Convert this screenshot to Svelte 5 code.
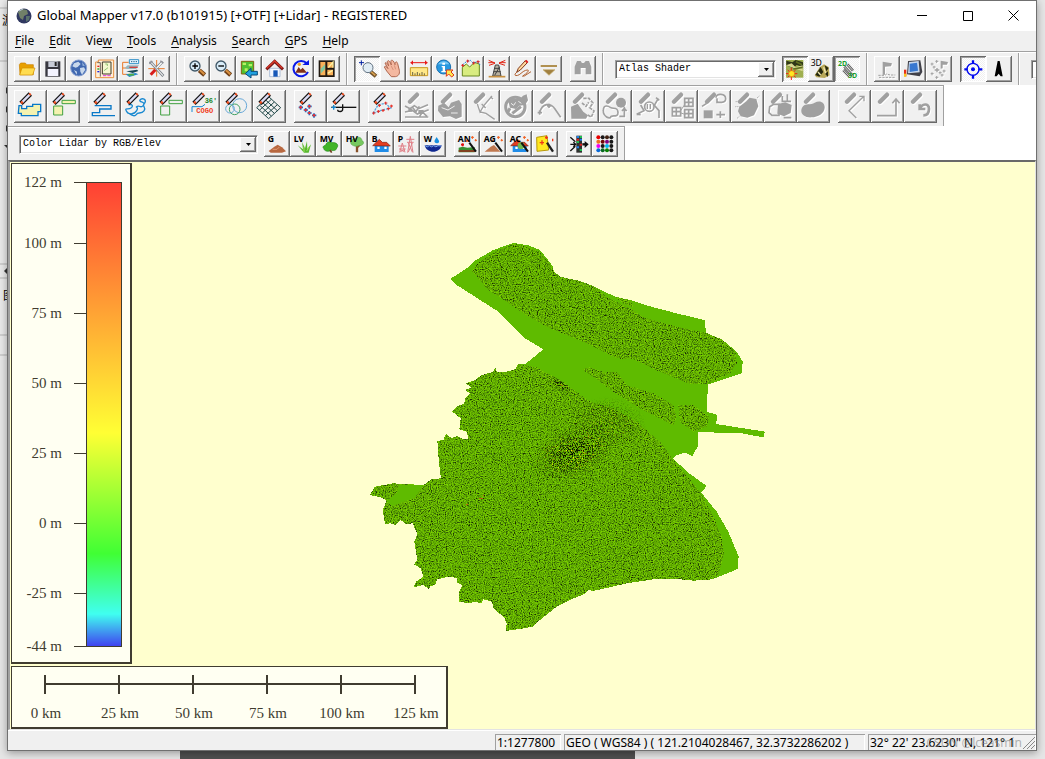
<script lang="ts">
  interface Tool {
    label: string;
    art: string;
    off?: boolean;
    pressed?: boolean;
  }

  const menus = ['File', 'Edit', 'View', 'Tools', 'Analysis', 'Search', 'GPS', 'Help'];
  const hotkeys: Record<string, number> = { View: 3 };

  // Icons are drawn on a grid of 3 units per pixel: 78 for small buttons, 99 for large ones
  const pencil =
    '<path d="M49 12 21 40" stroke="#111" stroke-width="14"/><path d="M47 14 24 37" stroke="#dcdcf4" stroke-width="7"/><path d="M50 11l-4 4M26 35l-5 5" stroke="#f05020" stroke-width="7"/>';
  const grayPencil = '<path d="M48 14 27 35" stroke="#a0a0a0" stroke-width="13" stroke-linecap="round"/>';
  const wand = '<path d="M46 35 66 62" stroke="#111" stroke-width="6"/><path d="M55 15v9M51 19h9M65 24v7M62 28h7M38 26v7M35 30h7" stroke="#f06020" stroke-width="3"/>';
  const house = '<path d="M20 42h42v21H20z" fill="#208ce8"/><path d="M14 44 34 25l9 9h13l11 11z" fill="#e43c20" stroke="#802010" stroke-width="2"/><path d="M28 47h7v7h-7zM49 47h7v7h-7z" fill="#fff"/>';
  const plus = (points: number[][], color: string) =>
    points.map(([x, y]) => `<path d="M${x - 4} ${y}h9M${x} ${y - 4}v9" stroke="${color}" stroke-width="3"/>`).join('');
  const tag = (t: string) => `<text x="11" y="33" font-family="Noto Sans, sans-serif" font-weight="700" font-size="26" fill="#000">${t}</text>`;
  const tower = (x: number, y: number, h: number) =>
    `<path d="M${x} ${y}l-8 ${h}M${x} ${y}l8 ${h}M${x - 12} ${y + 9}h24M${x - 10} ${y + 18}h20M${x - 6} ${y + 20}l12 ${h - 22}M${x + 6} ${y + 20}l-12 ${h - 22}" stroke="#e08088" stroke-width="3"/>`;
  const magnifier = (sign: string) =>
    `<path d="M46 43 62 57" stroke="#704018" stroke-width="13"/><path d="M48 43 61 55" stroke="#d89040" stroke-width="6"/><circle cx="33" cy="30" r="15" fill="#d8ecf8" stroke="#405868" stroke-width="4"/><path d="${sign}" stroke="#000" stroke-width="4"/>`;

  const fileTools: Tool[] = [
    { label: 'Open Data File', art: '<path d="M16 26l4-5h14l4 5h20v30H18z" fill="#e8a000" stroke="#c88000" stroke-width="2"/><path d="M17 57 24 36h39l-7 21z" fill="#ffdc50" stroke="#d09000" stroke-width="2"/>' },
    { label: 'Save Workspace', art: '<path d="M16 16h45v46H16z" fill="#383840"/><path d="M25 16h28v17H25z" fill="#c8ccd8"/><path d="M44 18h6v12h-6z" fill="#222"/><path d="M23 39h32v21H23z" fill="#f4f4ff"/>' },
    { label: 'Download Online Imagery', art: '<circle cx="38" cy="36" r="24" fill="#4068b0" stroke="#88a0d0" stroke-width="3"/><path d="M24 22l13-5 7 7-9 9-6 2-10-4zM42 36l12-2 4 7-10 15-5-9zM24 42l9 5-1 9z" fill="#c8d8ec"/><path d="M48 18l9 11-7 1z" fill="#90b0d8"/>' },
    { label: 'Overlay Control Center', art: '<path d="M11 18h8v-6h46v53H11z" fill="#fff0d8" stroke="#e89040" stroke-width="3"/><path d="M31 18h26v36H31z" fill="#f4f8d0" stroke="#403828" stroke-width="3"/><path d="M16 20h9v42" stroke="#222" stroke-width="2"/><path d="M16 31h6" stroke="#e02020" stroke-width="4"/><path d="M16 39h6" stroke="#20a020" stroke-width="4"/><path d="M16 47h6" stroke="#2020e0" stroke-width="4"/><path d="M40 24h6v6M36 44l12-9" stroke="#90c070" stroke-width="3"/><path d="M33 59h24" stroke="#e03ce0" stroke-width="3" stroke-dasharray="10 3"/>' },
    { label: 'Map Catalog', art: '<path d="M32 19H14v36h15M14 36h12" stroke="#e87828" stroke-width="3"/><path d="M34 11h28v12H34z" fill="#e8f8ff" stroke="#3090c8" stroke-width="3"/><path d="M39 17h19" stroke="#205888" stroke-width="3" stroke-dasharray="4 3"/><path d="M21 35l8-7h34l-9 11H26z" fill="#98b8c0"/><path d="M34 34h25" stroke="#d04040" stroke-width="4"/><path d="M25 46l32-5 4 4-17 6z" fill="#184858"/><path d="M23 55l30-4 8 4-27 8z" fill="#2888c8"/><path d="M31 56h17" stroke="#50b040" stroke-width="5"/>' },
    { label: 'Configure', art: '<path d="M38 12v50M13 38h49" stroke="#e87828" stroke-width="3"/><path d="M18 16 58 60" stroke="#707880" stroke-width="8"/><path d="M19 17 57 59" stroke="#e8e8e8" stroke-width="4"/><path d="M56 17 37 36" stroke="#788088" stroke-width="8"/><path d="M55 18 38 36" stroke="#fff" stroke-width="4"/><path d="M34 41 20 56" stroke="#d81c1c" stroke-width="9"/><path d="M16 23l9-8M49 14l9 8" stroke="#909098" stroke-width="4"/>' }
  ];

  const viewTools: Tool[] = [
    { label: 'Zoom In', art: magnifier('M25 30h17M33 22v17') },
    { label: 'Zoom Out', art: magnifier('M25 30h17') },
    { label: 'Zoom To Layer', art: '<path d="M16 16h37v38H16z" fill="#50c030" stroke="#806010" stroke-width="3"/><path d="M20 20h10v7H20zM38 24h10v7H38zM26 37h9v9h-9z" fill="#b8f060"/><path d="M64 46H45v-9L28 53l17 13v-9h19z" fill="#20a0e0" stroke="#084878" stroke-width="3"/>' },
    { label: 'Full View', art: '<path d="M23 37h31v25H23z" fill="#f4f8ff" stroke="#90a8c8" stroke-width="2"/><path d="M13 40 38 16l25 24" stroke="#781818" stroke-width="9"/><path d="M14 37 38 15l23 22" stroke="#d83828" stroke-width="4"/><path d="M34 43h13v19H34z" fill="#1858b8"/>' },
    { label: 'Restore Last View', art: '<path d="M60 48A23 23 0 1 1 57 23" stroke="#0818e8" stroke-width="6"/><path d="M43 27h20V12z" fill="#0818e8"/><path d="M22 50 32 33l6 8 6-6 13 15z" fill="#803018"/><circle cx="34" cy="25" r="5" fill="#f0a020"/>' },
    { label: 'Map Layout', art: '<path d="M14 13h48v50H14z" fill="#201810"/><path d="M19 18h15v40H19zM40 18h17v17H40zM40 41h17v17H40z" fill="#f8b058"/><path d="M20 38 33 25v14L20 53z" fill="#80c8a0"/><path d="M43 35 57 18v17M41 52l15-9" stroke="#fff0a0" stroke-width="4"/>' }
  ];

  const digitizeTools: Tool[] = [
    { label: 'Zoom Tool', pressed: true, art: '<path d="M15 20h15M22 13v15" stroke="#0020a0" stroke-width="3"/><path d="M50 47 66 61" stroke="#705028" stroke-width="12"/><path d="M51 47 64 58" stroke="#d8a050" stroke-width="5"/><circle cx="42" cy="35" r="15" fill="#e0ecf4" stroke="#607080" stroke-width="3"/>' },
    { label: 'Grab and Drag', art: '<path d="M15 21c5-4 9 5 11 9l-4-14c4-6 9 3 12 11-3-12-1-16 3-14 4 1 7 10 8 13 0-9 5-12 8-3l5 20c2 12-4 18-12 19H34L20 45l-7-12c3-6 8 2 11 5z" fill="#f4b8a0" stroke="#b06850" stroke-width="3"/><path d="M33 29l7 13M43 28l4 12" stroke="#c88068" stroke-width="2"/>' },
    { label: 'Measure', art: '<path d="M14 20h50" stroke="#e81818" stroke-width="3"/><path d="M21 13l-8 7 8 7zM57 13l8 7-8 7z" fill="#e81818"/><path d="M13 35h52v24H13z" fill="#ffe888" stroke="#c89820" stroke-width="3"/><path d="M20 58V48M27 58v-6M34 58V48M41 58v-6M48 58V48M55 58v-6" stroke="#202020" stroke-width="2"/>' },
    { label: 'Feature Info', art: '<circle cx="35" cy="33" r="21" fill="#2898e0" stroke="#1870b0" stroke-width="3"/><path d="M18 25a20 20 0 0 1 34 0z" fill="#78c8f4"/><path d="M31 20h8v6h-8zM29 30h10v15h4v4H28v-4h4V34h-3z" fill="#fff"/><path d="M43 42h20l-6 6 9 9-7 6-9-9-7 7z" fill="#ffe850" stroke="#e03818" stroke-width="3"/>' },
    { label: 'Path Profile', art: '<path d="M13 34 25 24l10 9 14-14 15 5v36H13z" fill="#d8ec80" stroke="#688820" stroke-width="3"/><path d="M13 27 25 17l12-4 9 9 13-6 7 11" stroke="#1888e0" stroke-width="3" stroke-dasharray="6 3"/>' + plus([[14, 28], [29, 15], [47, 21], [60, 17]], '#e02020') },
    { label: 'View Shed', art: '<path d="M34 27h10l7 33H26z" fill="#b8b0a0" stroke="#444" stroke-width="3"/><path d="M30 37h17M29 47h21M32 58l15-26" stroke="#404040" stroke-width="3"/><path d="M14 13l19 8M13 20h19M15 28l18-6M64 13l-19 8M65 20H46M63 28l-18-6" stroke="#e02818" stroke-width="3"/><path d="M14 62h50" stroke="#c89040" stroke-width="5"/>' },
    { label: 'Digitizer', art: '<path d="M46 14 25 37l-5 12 11-7 21-22z" fill="#ffd8a0" stroke="#803818" stroke-width="3"/><path d="M47 13l6 7" stroke="#e02020" stroke-width="6"/><path d="M21 48c-15 12 1 15 12 4s28-14 20-4-24 15-10 12l20-13" stroke="#b06030" stroke-width="3"/>' },
    { label: 'More Tools', art: '<path d="M14 27h49v6H14z" fill="#b09050"/><path d="M21 41h36L39 58z" fill="#a08040" stroke="#c8b070" stroke-width="2"/>' }
  ];

  const find: Tool = { label: 'Find', off: true, art: '<path d="M14 55V32l7-17h11l4 6h6l5-6h10l7 17v23H47V36H32v19z" fill="#a0a0a0"/>' };

  const shaderTools: Tool[] = [
    { label: 'Hill Shading', pressed: true, art: '<path d="M12 12h52v53H12z" fill="#a0b050"/><path d="M13 14l18 5 10-7 22 7v14l-19-6-11 10-20-9z" fill="#303818"/><path d="M12 28 29 22l12 12 21-6v18z" fill="#d8d890"/><path d="M42 17l18 9M34 39l28-5" stroke="#607020" stroke-width="5"/><path d="M28 35v37M12 53h34M17 42l24 22M41 42 17 64" stroke="#f02010" stroke-width="3"/><circle cx="29" cy="53" r="9" fill="#ffe820" stroke="#e87010" stroke-width="2"/>' },
    { label: '3D View', art: '<path d="M20 58 35 34l13-9 14 8 3 25-15 8-25-2z" fill="#b8a858"/><path d="M22 57 38 33l8 15-12 14zM50 28l12 8-7 10zM51 53l9-7v17z" fill="#252810"/><path d="M30 48l8 9M47 34l6 18" stroke="#f0e8b0" stroke-width="4"/><text x="8" y="31" font-family="Noto Sans, sans-serif" font-size="26" fill="#000">3D</text>' },
    { label: 'Link 2D and 3D', pressed: true, art: '<path d="M31 32l25 27M28 42l18 19M40 25l17 19" stroke="#606060" stroke-width="8"/><path d="M31 32l25 27M28 42l18 19M40 25l17 19" stroke="#d8d8d8" stroke-width="3"/><text x="12" y="31" font-family="Noto Sans, sans-serif" font-weight="700" font-size="21" fill="#18a030">2D</text><text x="42" y="66" font-family="Noto Sans, sans-serif" font-weight="700" font-size="21" fill="#18a030">3D</text>' }
  ];

  const gpsTools: Tool[] = [
    { label: 'Mark Waypoint', off: true, art: '<path d="M26 57V17l28 5-3 9-18 1v24" fill="#a0a0a0"/><path d="M13 58h20l5-4 10 3h16M15 64h47" stroke="#a0a0a0" stroke-width="3" stroke-dasharray="7 3"/>' },
    { label: 'GPS Tracking', art: '<path d="M24 15l37-2 6 35-8 13-38-6z" fill="#404048"/><path d="M27 18l29-3 3 34-35 3z" fill="#c8d8ec"/><path d="M29 23l22-3 3 24-25 4z" fill="#3878d0"/><path d="M12 41h7v20h-7z" fill="#e83018"/><path d="M12 53h7v9h-7z" fill="#f8c820"/>' },
    { label: 'GPS Vector', off: true, art: plus([[18, 24], [32, 16], [18, 53], [32, 64], [48, 57], [54, 45], [24, 33], [42, 50]], '#a0a0a0') + '<path d="M33 36v13M26 42h14" stroke="#a0a0a0" stroke-width="4"/><path d="M44 38V14l22 4-3 8H50v11" fill="#a0a0a0"/>' }
  ];

  const centerTools: Tool[] = [
    { label: 'Keep Vehicle Centered', pressed: true, art: '<circle cx="39" cy="40" r="18" stroke="#0008f0" stroke-width="4"/><circle cx="39" cy="40" r="6" fill="#0008f0"/><path d="M39 13v11M39 56v12M13 40h10M55 40h12" stroke="#0008f0" stroke-width="7"/>' },
    { label: 'North Arrow', art: '<path d="M35 15h6l9 46h-6l-6-8-6 8h-6z" fill="#000"/>' }
  ];

  const rects = (fill: string) =>
    `<path d="M20 48h27v27H20zM45 31h40v10H45z" fill="${fill}" stroke="#40a040" stroke-width="3"/>`;

  const areaTools: Tool[] = [
    { label: 'Create Area', art: '<path d="M15 47h8v9h15v-7h18v-6h24v22h-8v12H22v-7h-9z" fill="#f4f2b0" stroke="#0878c8" stroke-width="4"/>' + pencil },
    { label: 'Create Rectangle Area', art: rects('#f4f2b0') + pencil }
  ];

  const lineTools: Tool[] = [
    { label: 'Create Line', art: '<path d="M20 47h49v10H35v11H13v9h68" stroke="#0878c8" stroke-width="4"/>' + pencil },
    { label: 'Create Freehand Line', art: '<path d="M22 45c10-4 17 2 8 9s-20-3-14 9 23 12 31-1-7-9 2-13 9 8 18-3-15-9-10-16 17-3 16 5-10 6-4 15-1 19-14 19-6 10-18 8-12-10-19-8" stroke="#1888d0" stroke-width="4"/>' + pencil },
    { label: 'Create Rectangle Line', art: rects('none') + pencil },
    { label: 'Create Line by COGO', art: '<path d="M15 66V50h30l9-7" stroke="#1888d0" stroke-width="3"/><text x="53" y="38" font-family="Liberation Mono, monospace" font-weight="700" font-size="21" fill="#108020">36\'</text><text x="28" y="70" font-family="Liberation Mono, monospace" font-weight="700" font-size="21" fill="#f03818">COGO</text>' + pencil },
    { label: 'Create Range Rings', art: '<g stroke-width="3"><circle cx="59" cy="47" r="21" stroke="#68a8d8"/><circle cx="44" cy="58" r="16" stroke="#40a060"/><circle cx="30" cy="56" r="13" stroke="#68a8d8"/></g>' + pencil },
    { label: 'Create Grid', art: '<path d="M11 53 47 86 83 53 47 20zM19 45l36 33M28 37l36 33M37 29l36 33M19 61l36-33M28 69l36-33M37 77l36-33" stroke="#204848" stroke-width="3"/>' + pencil }
  ];

  const pointTools: Tool[] = [
    { label: 'Create Point', art: [[20, 52], [35, 60], [46, 49], [46, 69], [60, 76]].map(([x, y]) => `<path d="M${x - 6} ${y}h13M${x} ${y - 6}v13" stroke="#1870c8" stroke-width="5"/><circle cx="${x}" cy="${y}" r="4" fill="#e83030"/>`).join('') + pencil },
    { label: 'Create Spot', art: '<path d="M13 52h75" stroke="#111" stroke-width="4"/><path d="M14 52h13M20 45v14" stroke="#1888d0" stroke-width="4"/><path d="M47 43v15c0 9-15 8-15 1" stroke="#111" stroke-width="4"/>' + pencil }
  ];

  const g = (d: string) => grayPencil + `<path d="${d}" stroke="#a0a0a0" stroke-width="5"/>`;
  const gf = (d: string, holes = '') => grayPencil + `<path d="${d}" fill="#a0a0a0"/><path d="${holes}" stroke="#eee" stroke-width="3"/>`;

  const editTools: Tool[] = [
    { label: 'Edit Vertices', art: '<path d="M16 69 47 59 68 54 52 40 30 45z" stroke="#58a8e0" stroke-width="4" stroke-dasharray="7 3"/>' + plus([[17, 69], [31, 64], [45, 61], [61, 56], [70, 48], [53, 39], [34, 46]], '#e82820') + pencil },
    { label: 'Edit Features', off: true, art: g('M12 48l15 8 13-9 13 9 28-12M12 66l22-5 15 11 34-13M12 81h70M33 50l12 15 10-16M56 79l8-13 14 13') + '<path d="M22 56h12v9H22zM52 60h16v12H52z" fill="#a0a0a0"/>' },
    { label: 'Combine Areas', off: true, art: gf('M13 47l18-8 13 13 7-14 24-8 8 12v38l-17 7-18-8-21 2-15-19z', 'M23 53l19 7 20-12M51 69h20') },
    { label: 'Split Line', off: true, art: g('M31 42l8 24 12-20 24-28M40 66l17 4 26 18M44 42l12 12M70 20l8 7').replace('stroke-width="5"', 'stroke-width="4"') },
    { label: 'Rotate Features', off: true, art: '<circle cx="46" cy="51" r="29" stroke="#a0a0a0" stroke-width="9"/><path d="M25 34l12-9 23 2 9-10 11-4 4 18-9 14-17 2-10 10-18-4z" fill="#a0a0a0"/><path d="M37 70l26-20M30 55l-8 14" stroke="#a0a0a0" stroke-width="9"/><path d="M33 40l8 6 6-9M55 34l9 6" stroke="#eee" stroke-width="3"/>' },
    { label: 'Insert Vertex', off: true, art: g('M20 68C28 36 54 39 66 57l17 25M14 68h13M20 61v13M42 48h13M48 41v13') },
    { label: 'Move Features', off: true, art: gf('M15 50l20-9 17 24 14 11-6 10H16z') + '<path d="M52 25h17l12 14-10 14 13 10-8 18-13-7M48 39l12 10 8-12" stroke="#a0a0a0" stroke-width="5" stroke-dasharray="10 3"/>' },
    { label: 'Shift Features', off: true, art: g('M13 62c0-20 15-14 22-9s21-4 22 14-20 6-22 14-23-2-22-19M61 79h15V50M69 63l7-8 7 8') + '<circle cx="66" cy="38" r="15" fill="#a0a0a0"/>' },
    { label: 'Scale Features', off: true, art: g('M14 73l22-11-10-17M81 84V62L67 46l12-21M14 73l12 1M72 23l10 8') + '<circle cx="52" cy="50" r="14" stroke="#a0a0a0" stroke-width="5"/><path d="M46 42v15M55 42v15" stroke="#a0a0a0" stroke-width="4"/>' },
    { label: 'Snap Features', off: true, art: grayPencil + '<path d="M22 53h25v25H22zM22 65h25M34 53v25M59 25h25v24H59zM59 37h25M71 25v24M59 59h25v24H59zM59 71h25M71 59v24" stroke="#a0a0a0" stroke-width="5"/><path d="M44 66l17-25M46 68l15 6" stroke="#a0a0a0" stroke-width="3"/>' },
    { label: 'Convert Features', off: true, art: g('M12 49l14-9M54 23c0-15 29-12 29 3S59 38 57 34M57 25v12h11M55 74h26M67 64v20') + '<path d="M17 61h27v24H17z" fill="#a0a0a0"/>' },
    { label: 'Resize Area', off: true, art: gf('M25 50l21-16 10-11 20 4 6 22-13 27-20 7-20-4-8-15z') + '<path d="M13 50h13M14 35h7M78 24l7-6M25 79l-8 7" stroke="#a0a0a0" stroke-width="3" stroke-dasharray="3 3"/>' },
    { label: 'Duplicate Area', off: true, art: gf('M42 42l22-5 19 8-3 24-20 10-20-8z') + '<path d="M17 50l12-7h16v33H24l-9-8zM55 18v16h26M70 13v20M59 83h23" stroke="#a0a0a0" stroke-width="5"/>' },
    { label: 'Buffer Area', off: true, art: gf('M15 53c9-17 27-6 38-15 16-9 31-1 30 15-1 18-20 28-39 29-22 2-37-12-29-29z') }
  ];

  const undoTools: Tool[] = [
    { label: 'Crop to Line', off: true, art: g('M55 84 33 62l23-22 20-20M64 19h14v15').replace('stroke-width="5"', 'stroke-width="4"') },
    { label: 'Extend Line', off: true, art: g('M18 77h57V29M64 40l11-13 11 13') },
    { label: 'Undo', off: true, art: g('M47 43v14h17M48 56c5-15 27-18 27 0 0 13-7 20-17 20').replace('stroke-width="5"', 'stroke-width="8"') }
  ];

  const lidarTools: Tool[] = [
    { label: 'Ground', art: tag('G') + '<path d="M14 60 31 47l10-6 13 8 12 12-12 4H20z" fill="#b86840"/><path d="M26 55h13l7-7" stroke="#e09870" stroke-width="3"/>' },
    { label: 'Low Vegetation', art: '<path d="M42 65 23 43l16 12-3-22 9 19 6-22 1 24 11-14-7 25z" fill="#58b830"/><path d="M42 63V47M50 60l7-12" stroke="#a0e060" stroke-width="3"/>' + tag('LV') },
    { label: 'Medium Vegetation', art: '<path d="M29 43c1-10 13-13 19-8 14-2 22 8 14 16-1 9-12 8-16 7-12 7-23 0-23-6-5-5 1-8 6-9z" fill="#40b428" stroke="#208818" stroke-width="2"/><path d="M42 57l5 8" stroke="#704020" stroke-width="5"/>' + tag('MV') },
    { label: 'High Vegetation', art: '<path d="M45 39v25M45 49l12-12" stroke="#885028" stroke-width="7"/><path d="M28 40c-7-11 6-19 13-17 7-9 20-2 18 5 12 6 2 18-7 15-10 5-18 2-24-3z" fill="#78c860" stroke="#58a848" stroke-width="2"/>' + tag('HV') },
    { label: 'Building', art: house + tag('B') },
    { label: 'Power Line', art: tower(25, 36, 28) + tower(49, 16, 49) + tag('P') },
    { label: 'Water', art: '<path d="M14 43h51c-5 26-46 26-51 0z" fill="#102890"/><path d="M15 44q7 7 13 0 7 7 13 0 7 7 13 0l10 1" stroke="#78a8f0" stroke-width="3"/><path d="M50 18l-6 10c-5 12 19 12 12 0z" fill="#1890e0"/>' + tag('W') }
  ];

  const classifyTools: Tool[] = [
    { label: 'Auto Classify Noise', art: '<path d="M14 50l12-3 14 3 22-2v16H14z" fill="#389030"/><path d="M14 60h50" stroke="#804020" stroke-width="6"/><path d="M26 37v9M21 41h9" stroke="#e01010" stroke-width="5"/>' + wand + tag('AN') },
    { label: 'Auto Classify Ground', art: '<path d="M14 62 32 47l10-5 19 20z" fill="#c07850"/>' + wand + tag('AG') },
    { label: 'Auto Classify Buildings', art: house + '<circle cx="45" cy="44" r="10" fill="#70b850"/>' + wand + tag('AC') },
    { label: 'Extract Features', art: '<path d="M14 19l31-5 5 43-35 4z" fill="#ffe820" stroke="#b89808" stroke-width="3"/><path d="M30 28v13M23 35h13M43 15v9M39 20h9M62 23v8" stroke="#f03818" stroke-width="4"/><path d="M45 35 63 62" stroke="#202020" stroke-width="7"/>' }
  ];

  const dotColors = ['#e80000', '#181818', '#402010', '#181818', '#f07020', '#700808', '#800080', '#181818', '#f000f0', '#181818', '#00b8f0', '#181818', '#0868d8', '#086820', '#088000', '#181818'];
  const filterTools: Tool[] = [
    { label: 'Filter Lidar', art: '<path d="M13 19l15 13M13 60l15-14M13 40h13M22 34l7 6-7 7" stroke="#111" stroke-width="4"/><path d="M31 14h17v51H31z" fill="#303030"/><path d="M32 18h7M41 26h7M32 49h7" stroke="#2080e8" stroke-width="6"/><path d="M41 18h7M32 33h7M41 57h7" stroke="#20c050" stroke-width="6"/><path d="M32 26h7M41 41h7" stroke="#e02020" stroke-width="6"/><path d="M49 40h10" stroke="#111" stroke-width="7"/><path d="M56 30l12 10-12 11z" fill="#111"/>' },
    { label: 'Lidar Color Table', art: dotColors.map((c, i) => `<circle cx="${19 + (i % 4) * 13}" cy="${19 + Math.floor(i / 4) * 13}" r="6" fill="${c}"/>`).join('') }
  ];

  // Elevation legend, 464px tall from 122 m down to -44 m
  const elevations = [122, 100, 75, 50, 25, 0, -25, -44];
  const elevationY = (m: number) => 19 + Math.round(((122 - m) / 166) * 464);

  const distances = [0, 25, 50, 75, 100, 125];

  const southCoast =
    '1057,1048 1000,1052 960,1048 880,1048 800,1060 700,1083 685,1080 674,1092 635,1107 590,1130 540,1170 518,1190 480,1197 438,1203 440,1180 432,1162 400,1135 396,1115 370,1108 365,1120 345,1115 330,1120 296,1115 297,1085 307,1065 290,1058 292,1044 265,1040 232,1048 225,1065 210,1068 208,1078 190,1065 160,1072 168,1055 190,1040 182,1015 162,1003 172,990 163,935 172,912 158,880 138,882 122,870 108,885 92,880 75,882 68,840 80,812 62,802 30,795 45,770 100,760 190,765 215,748 243,745 237,700 232,633 250,630 258,612 275,625 290,618 310,628 325,627 320,605 298,598 302,565 277,545 290,530 313,520 316,505 330,490 316,480 335,472 316,460 345,450 362,437 400,425 405,412 412,427 440,425 465,418 475,402';
  const northEdge =
    '495,403 550,358 490,322 450,280 415,245 290,165 272,146 320,115 345,92 400,60 460,39 505,46 540,60 578,108 580,122 600,140 660,153 700,168 740,188 766,200 810,210 880,232 950,250 1036,271 1037,315 1085,328 1130,365 1148,395 1146,430 1110,442 1044,463 1040,545 1072,555 1068,582 1215,605 1210,622 1145,610 1014,606 1013,650 997,678 975,668 950,676 938,685 985,728 1040,768 1024,788 1070,845 1105,905 1136,980 1133,1017';

  let shader = $state('Atlas Shader');
  let lidarMode = $state('Color Lidar by RGB/Elev');
</script>

{#snippet buttons(tools: Tool[], large = false)}
  <div class="group">
    {#each tools as tool}
      <button class="tool" class:large class:pressed={tool.pressed} class:off={tool.off} disabled={tool.off} aria-label={tool.label}>
        <svg viewBox={large ? '0 0 99 99' : '0 0 78 78'} fill="none">{@html tool.art}</svg>
      </button>
    {/each}
  </div>
{/snippet}

{#snippet arrow()}
  <span class="arrow"><svg viewBox="0 0 5 3" width="5" height="3"><path d="M0 0h5L2.5 3z" /></svg></span>
{/snippet}

<div class="desktop">
  <svg class="behind" width="8" height="360" aria-hidden="true">
    <path d="M0 0h8v360H0z" fill="#eaeaea" />
    <path d="M0 8h8M0 61h8M0 264h8M0 278h8M0 335h8M0 355h8" stroke="#b4b4b4" />
    <path d="M6 87l3 3-3 4zM6 106l3 3-3 4zM6 125l3 3-3 4zM4 145h4v4zM8 267l-4 4 4 4z" fill="#333" />
    <text x="2" y="25">游</text>
    <text x="3" y="300">图</text>
  </svg>
  <div class="photo"></div>

  <main class="window">
    <header class="title-bar">
      <svg class="logo" viewBox="0 0 16 16" width="16" height="16">
        <circle cx="8" cy="8" r="7.5" fill="#303860" />
        <path d="M2 4l4-3 5 1 1 4-4 2-1 4-3-2z" fill="#708068" />
        <path d="M10 8l4 0-1 4-3 2z" fill="#58706c" />
        <path d="M3 3l4-2" stroke="#b8c8d8" />
      </svg>
      <h1>Global Mapper v17.0 (b101915) [+OTF] [+Lidar] - REGISTERED</h1>
      <div class="window-buttons">
        <button aria-label="Minimize"><svg viewBox="0 0 11 11"><path d="M1 5.5h10" /></svg></button>
        <button aria-label="Maximize"><svg viewBox="0 0 11 11"><path d="M1.500 1.500h9v9h-9z" /></svg></button>
        <button aria-label="Close"><svg viewBox="0 0 11 11"><path d="M.5.5l10 10M10.500.5l-10 10" /></svg></button>
      </div>
    </header>

    <nav class="menu">
      {#each menus as menu}
        {@const k = hotkeys[menu] ?? 0}
        <button>{menu.slice(0, k)}<u>{menu[k]}</u>{menu.slice(k + 1)}</button>
      {/each}
    </nav>

    <div class="bars">
      <div class="bar full">
        {@render buttons(fileTools)}
        <i class="sep"></i>
        {@render buttons(viewTools)}
        <i class="sep"></i>
        {@render buttons(digitizeTools)}
        {@render buttons([find])}
        <i class="sep"></i>
        <div class="combo shader">
          <select bind:value={shader} aria-label="Shader">
            <option>Atlas Shader</option>
            <option>Daylight Shader</option>
          </select>
          {@render arrow()}
        </div>
        {@render buttons(shaderTools)}
        <i class="sep"></i>
        {@render buttons(gpsTools)}
        {@render buttons(centerTools)}
        <i class="sep"></i>
        <div class="combo cut">
          <svg viewBox="0 0 6 15" width="6" height="15"><path d="M2 3h3v2H2z" fill="#2878c8" /><path d="M3 6h3v2H3z" fill="#e8a030" /><path d="M2 9h4" stroke="#222" /></svg>
        </div>
      </div>
      <div class="bar">
        {@render buttons(areaTools, true)}
        {@render buttons(lineTools, true)}
        {@render buttons(pointTools, true)}
        {@render buttons(editTools, true)}
        {@render buttons(undoTools, true)}
      </div>
      <div class="bar">
        <div class="combo lidar">
          <select bind:value={lidarMode} aria-label="Lidar display">
            <option>Color Lidar by RGB/Elev</option>
            <option>Color Lidar by Elevation</option>
          </select>
          {@render arrow()}
        </div>
        {@render buttons(lidarTools)}
        {@render buttons(classifyTools)}
        {@render buttons(filterTools)}
      </div>
    </div>

    <section class="map">
      <svg class="terrain" viewBox="0 0 1260 1230" shape-rendering="crispEdges">
        <filter id="relief" x="0" y="0" width="100%" height="100%" color-interpolation-filters="sRGB">
          <feTurbulence type="fractalNoise" baseFrequency="0.29" numOctaves="2" seed="7" />
          <feColorMatrix values="0 0 0 2 -.4  0 0 0 2 -.4  0 0 0 2 -.4  0 0 0 0 1" />
          <feComponentTransfer>
            <feFuncR type="table" tableValues=".1 .18 .27 .35 .4 .44 .48" />
            <feFuncG type="table" tableValues=".16 .34 .5 .63 .7 .76 .82" />
            <feFuncB type="table" tableValues="0 .02 .02 0 0 0 0" />
          </feComponentTransfer>
          <feComposite in2="SourceGraphic" operator="in" />
        </filter>
        <filter id="urban" x="-10%" y="-10%" width="120%" height="120%" color-interpolation-filters="sRGB">
          <feTurbulence type="fractalNoise" baseFrequency="0.25" numOctaves="2" seed="21" />
          <feColorMatrix values="9 0 0 0 -5.2  8 0 0 0 -4.7  0 0 0 0 0  0 0 0 10 -5.1" />
          <feComposite in2="SourceGraphic" operator="in" />
        </filter>
        <radialGradient id="fade">
          <stop offset="0" stop-color="#000" />
          <stop offset="0.5" stop-color="#000" stop-opacity="0.7" />
          <stop offset="1" stop-color="#000" stop-opacity="0" />
        </radialGradient>
        <polygon fill="#5fbb00" points="{southCoast} {northEdge}" />
        <g filter="url(#relief)">
          <polygon points="335,122 360,95 410,62 460,42 500,48 537,65 575,108 585,130 600,140 660,153 700,168 740,200 810,235 850,262 950,290 1037,308 1085,328 1128,368 1130,400 1110,430 1040,463 990,462 900,425 820,388 770,385 680,340 560,290 490,250 440,215 385,180" />
          <polygon points="665,418 690,412 735,428 770,425 800,465 880,490 940,525 950,560 940,587 900,565 840,535 760,485 700,440" />
          <polygon points="955,525 1000,525 1048,560 1040,590 1000,605 960,575" />
          <polygon points="766,200 810,212 822,232 790,222" />
          <polygon points="{southCoast} 530,412 600,450 690,515 760,535 830,575 905,640 940,690 1020,785 1060,860 1085,920 1092,970 1075,1035" />
        </g>
        <polygon fill="#5fbb00" points="80,812 110,790 118,765 190,765 165,803 95,828" />
        <g filter="url(#urban)" fill="url(#fade)">
          <ellipse cx="640" cy="670" rx="130" ry="75" transform="rotate(-22 640 670)" />
          <ellipse cx="740" cy="580" rx="120" ry="80" opacity="0.5" />
          <ellipse cx="600" cy="465" rx="40" ry="16" transform="rotate(30 600 465)" />
        </g>
        <path d="M317 822h6M358 804h12M368 795h4" stroke="#b86010" stroke-width="3" />
      </svg>

      <div class="overlays">
        <svg class="panel" width="118" height="498" viewBox="0 0 118 498">
          <defs>
            <linearGradient id="ramp" x2="0" y2="1">
              <stop offset="0" stop-color="#ff4034" />
              <stop offset="0.54" stop-color="#ffff34" />
              <stop offset="0.8" stop-color="#40ff34" />
              <stop offset="0.93" stop-color="#40fff0" />
              <stop offset="1" stop-color="#4040f0" />
            </linearGradient>
          </defs>
          <rect x="74.500" y="18.500" width="35" height="464" fill="url(#ramp)" stroke="#403c30" />
          {#each elevations as m}
            <path d="M62 {elevationY(m) - 0.5}h12" stroke="#403c30" />
            <text x="50" y={elevationY(m) + 4} text-anchor="end">{m} m</text>
          {/each}
        </svg>
        <svg class="panel" width="434" height="60" viewBox="0 0 434 60">
          <path d="M33 17h370" stroke="#403c30" stroke-width="2" />
          {#each distances as km, i}
            <path d="M{33 + i * 74} 8v19" stroke="#403c30" stroke-width="2" />
            <text x={34 + i * 74} y="51" text-anchor="middle">{km} km</text>
          {/each}
        </svg>
      </div>
    </section>

    <footer class="status">
      <span class="scale">1:1277800</span>
      <span class="projection">GEO ( WGS84 ) ( 121.2104028467, 32.3732286202 )</span>
      <span class="position">32° 22' 23.6230" N, 121° 1</span>
      <em>CSDN @lceasmin</em>
      <svg class="grip" viewBox="0 0 12 12" width="12" height="12"><path d="M0 12 12 0M4 12l8-8M8 12l4-4" /></svg>
    </footer>
  </main>
</div>

<style>
  :global(body) {
    background: #e6e6e6;
  }

  .desktop {
    position: relative;
    box-sizing: border-box;
    height: 100vh;
    padding: 0 8px 8px 7px;
    overflow: hidden;
    font-family: "Noto Sans", "Open Sans", sans-serif;
    font-size: 12px;
    color: #000;
  }

  .behind {
    position: absolute;
    left: 0;
    top: 0;
    font-family: "Noto Sans CJK SC", sans-serif;
  }

  .photo {
    position: absolute;
    left: 180px;
    bottom: 0;
    width: 455px;
    height: 8px;
    background: #505050;
  }

  .window {
    position: relative;
    box-sizing: border-box;
    height: 100%;
    display: flex;
    flex-direction: column;
    border: 1px solid #707070;
    background: #f0f0f0;
    box-shadow: 0 2px 8px rgba(0, 0, 0, 0.35);
  }

  button {
    padding: 0;
    border: 0;
    background: none;
    font: inherit;
    color: inherit;
  }

  .title-bar {
    display: flex;
    align-items: center;
    height: 30px;
    padding-left: 8px;
    background: #fff;
  }

  h1 {
    flex: 1;
    margin: 0 0 2px 5px;
    font-size: 13px;
    font-weight: 400;
    white-space: nowrap;
  }

  .window-buttons {
    display: flex;
  }

  .window-buttons button {
    width: 46px;
    height: 30px;
  }

  .window-buttons svg {
    width: 11px;
    height: 11px;
    fill: none;
    stroke: #000;
  }

  .menu {
    display: flex;
    gap: 15px;
    height: 20px;
    padding-left: 7px;
  }

  .menu button {
    line-height: 18px;
  }

  u {
    text-underline-offset: 2px;
  }

  .bars {
    background: #fff;
  }

  .bar {
    display: flex;
    gap: 8px;
    box-sizing: border-box;
    width: fit-content;
    padding: 4px 6px 3px;
    border-top: 1px solid #a0a0a0;
    border-right: 1px solid #a0a0a0;
    background: #f0f0f0;
    box-shadow: inset 0 1px #fff;
  }

  .bar.full {
    width: 100%;
    overflow: hidden;
    border-right: 0;
    padding-right: 0;
  }

  .group {
    display: flex;
    flex-shrink: 0;
  }

  .sep {
    flex-shrink: 0;
    width: 1px;
    margin: -3px -2px;
    border-right: 1px solid #fff;
    background: #a0a0a0;
  }

  .tool {
    width: 26px;
    height: 26px;
    background: #f0f0f0;
    box-shadow: inset -1px -1px #696969, inset 1px 1px #fff, inset -2px -2px #a0a0a0;
  }

  .tool.large {
    width: 33px;
    height: 33px;
  }

  .tool svg {
    display: block;
    width: 100%;
    height: 100%;
  }

  .tool.off svg {
    filter: drop-shadow(1px 1px 0 #fff);
  }

  .tool.pressed {
    background: repeating-conic-gradient(#fff 0 25%, #f0f0f0 0 50%) 0 0 / 2px 2px;
    box-shadow: inset 1px 1px #696969, inset -1px -1px #fff, inset 2px 2px #a0a0a0;
  }

  .combo {
    position: relative;
    align-self: center;
    flex-shrink: 0;
    box-sizing: border-box;
    height: 19px;
    border: 1px solid;
    border-color: #a0a0a0 #fff #fff #a0a0a0;
    box-shadow: inset 1px 1px #696969, inset -1px -1px #e3e3e3;
    background: #fff;
  }

  .combo select {
    display: block;
    width: 100%;
    height: 100%;
    padding: 0 20px 2px 3px;
    border: 0;
    appearance: none;
    background: none;
    font: 10px "Liberation Mono", monospace;
    color: #000;
  }

  .shader {
    width: 161px;
    margin-left: 5px;
    margin-right: -2px;
  }

  .lidar {
    width: 239px;
    margin-left: 5px;
    margin-right: -2px;
  }

  .cut {
    width: 20px;
    margin-left: 5px;
    padding: 1px 2px;
  }

  .arrow {
    position: absolute;
    top: 1px;
    right: 1px;
    bottom: 1px;
    width: 16px;
    display: grid;
    place-items: center;
    background: #f0f0f0;
    box-shadow: inset -1px -1px #696969, inset 1px 1px #fff, inset -2px -2px #a0a0a0;
    pointer-events: none;
  }

  .map {
    position: relative;
    flex: 1;
    min-height: 0;
    display: flex;
    flex-direction: column;
    justify-content: flex-end;
    overflow: hidden;
    border: solid;
    border-width: 2px 1px 1px 2px;
    border-color: #696969 #e3e3e3 #e3e3e3 #a0a0a0;
    background: #ffffce;
  }

  .terrain {
    position: absolute;
    left: 350px;
    top: 68px;
    width: 420px;
    height: 410px;
  }

  .overlays {
    display: flex;
    flex-direction: column;
    align-items: flex-start;
    gap: 2px;
    padding-left: 1px;
  }

  .panel {
    display: block;
    border: solid #403c30;
    border-width: 1px 2px 2px 1px;
    background: #fffff2;
    font-family: "Liberation Serif", serif;
    font-size: 15px;
    fill: #403c30;
  }

  .status {
    position: relative;
    display: flex;
    justify-content: flex-end;
    gap: 3px;
    height: 16px;
    padding-top: 3px;
    border-top: 1px solid #fff;
    line-height: 15px;
    white-space: nowrap;
  }

  .status span {
    box-sizing: border-box;
    overflow: hidden;
    padding-left: 1px;
    border: solid #a0a0a0;
    border-width: 1px 0 0 1px;
    box-shadow: inset -1px 0 #fff;
  }

  .scale {
    width: 66px;
  }

  .projection {
    width: 301px;
  }

  .position {
    width: 168px;
  }

  .status em {
    position: absolute;
    right: 14px;
    top: 4px;
    font-style: normal;
    color: rgba(130, 130, 130, 0.6);
  }

  .grip {
    position: absolute;
    right: 1px;
    bottom: 1px;
    stroke: #888;
  }
</style>
